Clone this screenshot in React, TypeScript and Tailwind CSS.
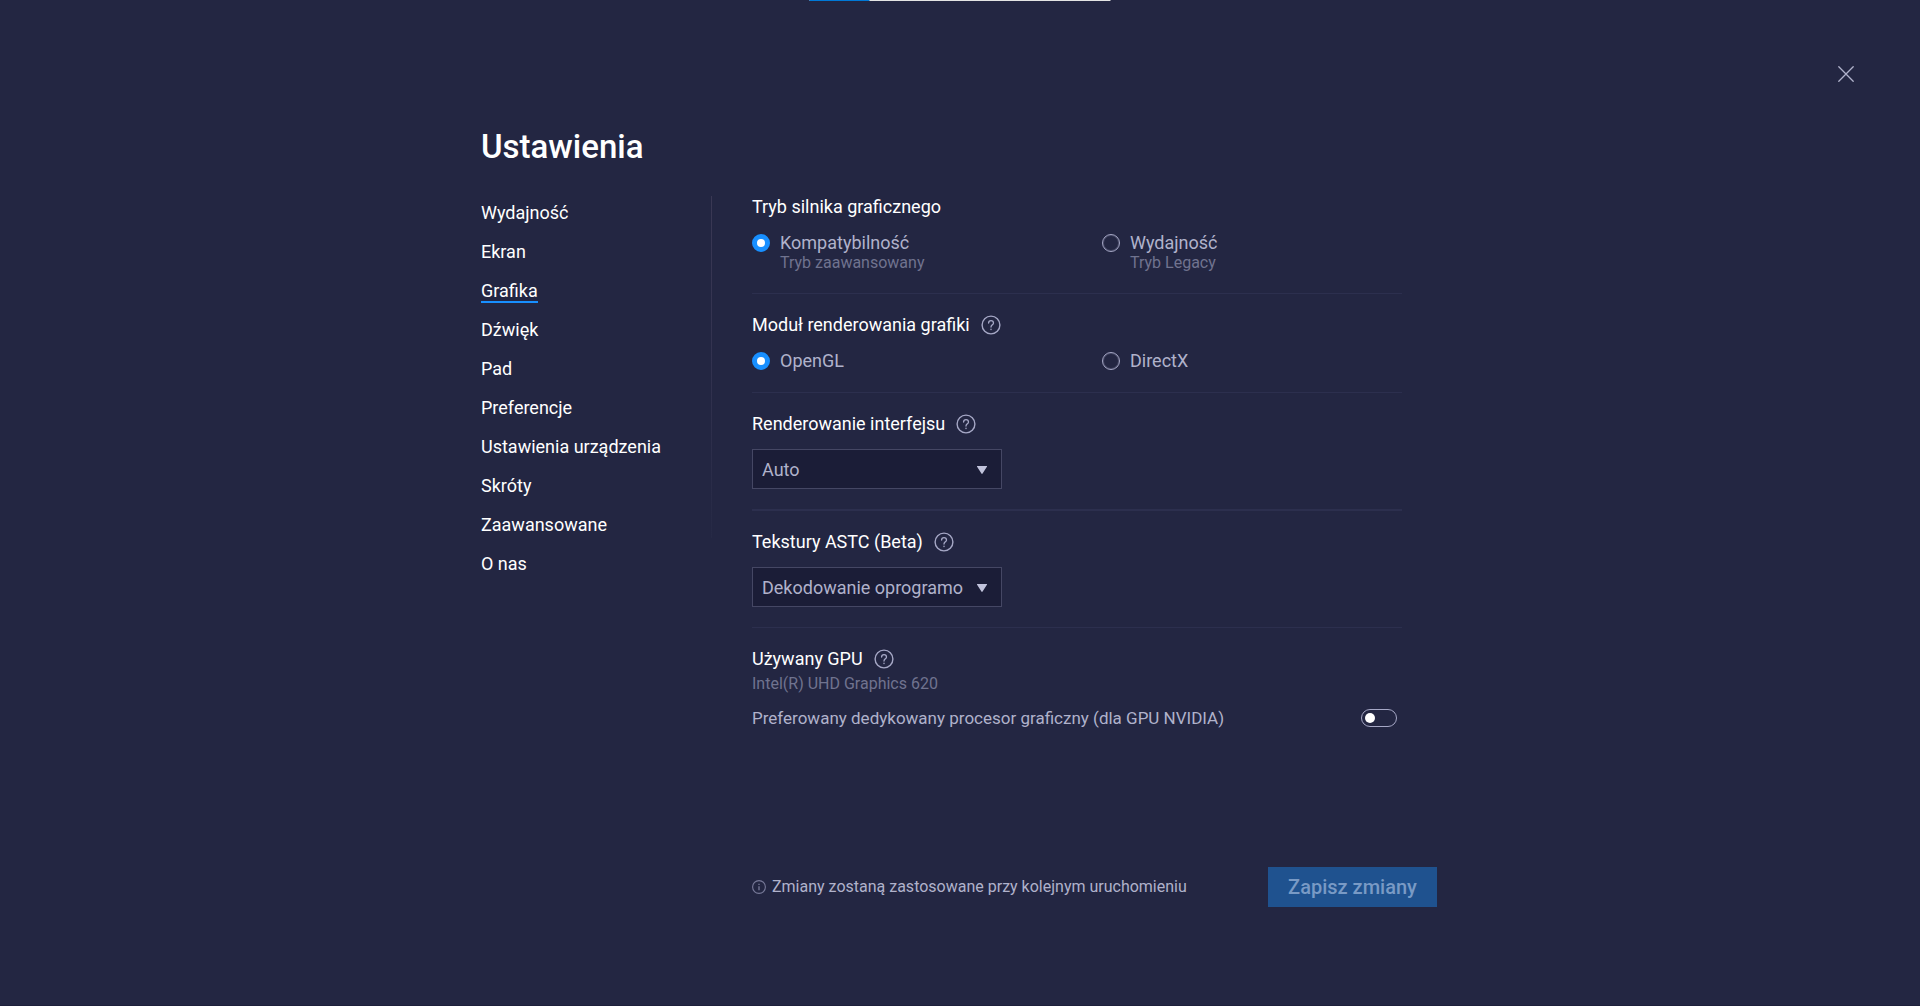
import { useState, type ReactNode } from "react";

const NAV = [
  "Wydajność",
  "Ekran",
  "Grafika",
  "Dźwięk",
  "Pad",
  "Preferencje",
  "Ustawienia urządzenia",
  "Skróty",
  "Zaawansowane",
  "O nas",
];

function HelpButton({ topic }: { topic: string }) {
  return (
    <button type="button" aria-label={`Pomoc: ${topic}`} className="text-[#a6a8c6]">
      <svg viewBox="0 0 20 20" className="size-5" fill="none" stroke="currentColor" strokeLinecap="round">
        <circle cx="10" cy="10" r="8.9" strokeWidth="1.4" />
        <path d="M7.6 8c0-1.5 1-2.4 2.4-2.4s2.5 1 2.5 2.3c0 1.9-2.5 1.8-2.5 4.1" strokeWidth="1.3" />
        <path d="M10 14.2v.3" strokeWidth="1.4" />
      </svg>
    </button>
  );
}

function Section({
  title,
  help,
  divider,
  children,
}: {
  title: string;
  help?: boolean;
  divider?: string;
  children: ReactNode;
}) {
  return (
    <section className={`pt-[19px] ${divider ?? ""}`}>
      <div className="flex h-6 items-center gap-[11px]">
        <h2 className="text-[18px] leading-6 text-white">{title}</h2>
        {help && <HelpButton topic={title} />}
      </div>
      {children}
    </section>
  );
}

function Radio({
  name,
  label,
  hint,
  checked,
  onSelect,
}: {
  name: string;
  label: string;
  hint?: string;
  checked: boolean;
  onSelect: () => void;
}) {
  return (
    <label className="flex items-start gap-[10px]">
      <input
        type="radio"
        name={name}
        checked={checked}
        onChange={onSelect}
        className="mt-[3px] size-[18px] shrink-0 appearance-none rounded-full border border-[#a6a8c6] ring-1 ring-[#a6a8c6]/25 ring-inset checked:border-[5px] checked:border-[#188fff] checked:bg-white checked:ring-0"
      />
      <span className="flex flex-col">
        <span className="text-[18px] leading-6 text-[#b0b2cb]">{label}</span>
        {hint && <span className="text-[16px] leading-4 text-[#70738f]">{hint}</span>}
      </span>
    </label>
  );
}

function Select({ label, value }: { label: string; value: string }) {
  return (
    <div className="relative mt-[13px] w-[250px]">
      <select
        aria-label={label}
        className="block h-10 w-full appearance-none border border-[#454764] bg-[#1b1d37] pr-8 pl-[9px] text-[18px] text-[#b0b2cb]"
      >
        <option>{value}</option>
      </select>
      <svg viewBox="0 0 10 8" className="pointer-events-none absolute top-[17px] right-[15px] h-2 w-[10px]">
        <path d="M0.5 0h9a.4.4 0 0 1 .4.7L5.6 7.5a.7.7 0 0 1-1.2 0L.1.7A.4.4 0 0 1 .5 0Z" fill="#c1c3dc" />
      </svg>
    </div>
  );
}

export default function App() {
  const [mode, setMode] = useState(0);
  const [renderer, setRenderer] = useState(0);
  const [gpu, setGpu] = useState(false);

  return (
    <div className="relative flex min-h-screen flex-col border-b border-[#1d1f3b] bg-[#232642] font-['Roboto','Noto_Sans',sans-serif] text-white">
      <div className="absolute top-0 left-1/2 flex h-px w-[301px] -translate-x-1/2 bg-[#e4e4e4]">
        <div className="w-[60px] bg-[#0078d7]" />
      </div>

      <div className="flex justify-end pt-[64px] pr-[64px]">
        <button type="button" aria-label="Zamknij" className="p-[2px] text-[#b0b2cb]">
          <svg viewBox="0 0 16 16" className="size-4" stroke="currentColor" strokeWidth="1.3" strokeLinecap="round">
            <path d="M.8.8l14.4 14.4M15.2.8L.8 15.2" />
          </svg>
        </button>
      </div>

      <div className="mx-auto w-full max-w-[958px] pr-[2px]">
        <h1 className="mt-[43px] text-[33px] leading-10 font-medium">Ustawienia</h1>

        <div className="mt-[9px] flex items-start">
          <nav className="mt-[20px] flex h-[342px] w-[231px] shrink-0 flex-col border-r [border-image:linear-gradient(#3a3854,#32324f_50%,#262945)_1]">
            <ul className="flex flex-col gap-[15px] pt-[5px]">
              {NAV.map((item) => (
                <li key={item} className="flex h-6">
                  <a
                    href="#"
                    className={
                      item === "Grafika"
                        ? "border-b-2 border-[#188fff] text-[18px] leading-6 whitespace-nowrap"
                        : "text-[18px] leading-6 whitespace-nowrap"
                    }
                  >
                    {item}
                  </a>
                </li>
              ))}
            </ul>
          </nav>

          <main className="ml-10 flex-1">
            <div className="mr-[35px]">
              <Section title="Tryb silnika graficznego" divider="border-b border-[#2c2f4e] pb-[22px]">
                <div className="mt-[12px] grid grid-cols-[350px_1fr]">
                  <Radio name="mode" label="Kompatybilność" hint="Tryb zaawansowany" checked={mode === 0} onSelect={() => setMode(0)} />
                  <Radio name="mode" label="Wydajność" hint="Tryb Legacy" checked={mode === 1} onSelect={() => setMode(1)} />
                </div>
              </Section>

              <Section title="Moduł renderowania grafiki" help divider="border-b border-[#2c2f4e] pb-[19px]">
                <div className="mt-[12px] grid grid-cols-[350px_1fr]">
                  <Radio name="renderer" label="OpenGL" checked={renderer === 0} onSelect={() => setRenderer(0)} />
                  <Radio name="renderer" label="DirectX" checked={renderer === 1} onSelect={() => setRenderer(1)} />
                </div>
              </Section>

              <Section title="Renderowanie interfejsu" help divider="border-b-2 border-[#2c2f4e] pb-5">
                <Select label="Renderowanie interfejsu" value="Auto" />
              </Section>

              <Section title="Tekstury ASTC (Beta)" help divider="border-b border-[#2c2f4e] pb-5">
                <Select label="Tekstury ASTC (Beta)" value="Dekodowanie oprogramo" />
              </Section>

              <Section title="Używany GPU" help>
                <p className="mt-[5px] text-[16px] leading-4 text-[#70738f]">Intel(R) UHD Graphics 620</p>
                <label className="mt-[14px] flex items-center justify-between pr-[5px]">
                  <span className="text-[17px] leading-6 text-[#b0b2cb]">
                    Preferowany dedykowany procesor graficzny (dla GPU NVIDIA)
                  </span>
                  <input
                    type="checkbox"
                    role="switch"
                    checked={gpu}
                    onChange={() => setGpu(!gpu)}
                    className="flex h-[18px] w-9 appearance-none items-center rounded-full border border-[#a6a8c6] px-[3px] before:size-[10px] before:rounded-full before:bg-white checked:justify-end"
                  />
                </label>
              </Section>
            </div>

            <footer className="mt-[137px] flex items-center justify-between">
              <p className="flex items-center gap-[6px] text-[16px] leading-6 text-[#b0b2cb]">
                <svg viewBox="0 0 14 14" className="size-[14px] text-[#787a99]" fill="none" stroke="currentColor">
                  <circle cx="7" cy="7" r="6.4" strokeWidth="1.1" />
                  <path d="M7 6.2v4M7 3.8v1.1" strokeWidth="1.3" />
                </svg>
                Zmiany zostaną zastosowane przy kolejnym uruchomieniu
              </p>
              <button type="button" disabled className="h-10 w-[169px] bg-[#1f528f] text-[20px] font-medium text-[#799ac5]">
                Zapisz zmiany
              </button>
            </footer>
          </main>
        </div>
      </div>
    </div>
  );
}
